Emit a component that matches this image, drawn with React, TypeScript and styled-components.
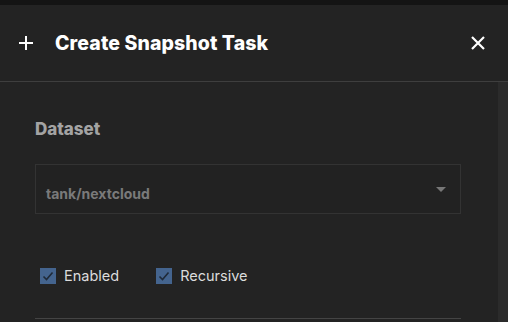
import React from "react";
import { styled, createGlobalStyle } from "styled-components";

const GlobalStyle = createGlobalStyle`
  html, body {
    margin: 0;
    padding: 0;
    background: #232323;
    font-family: Inter, "Noto Sans", sans-serif;
  }
`;

function PlusIcon() {
  return (
    <svg width="16" height="16" viewBox="0 0 16 16">
      <path d="M8 1v14M1 8h14" stroke="#fff" strokeWidth="2" fill="none" />
    </svg>
  );
}

function CloseIcon() {
  return (
    <svg width="16" height="16" viewBox="0 0 16 16">
      <path d="M2 2l12 12M14 2L2 14" stroke="#fff" strokeWidth="2.2" fill="none" />
    </svg>
  );
}

function CheckIcon() {
  return (
    <svg width="12" height="12" viewBox="0 0 12 12">
      <path d="M1.5 6.5l3 3 6-7" stroke="#1f2a38" strokeWidth="1.6" fill="none" />
    </svg>
  );
}

const options = [
  { id: 0, label: "Enabled", checked: true },
  { id: 1, label: "Recursive", checked: true },
];

export default function App() {
  return (
    <>
      <GlobalStyle />
      <Page>
        <TopStrip />
        <Header>
          <IconButton>
            <PlusIcon />
          </IconButton>
          <Title>Create Snapshot Task</Title>
          <CloseButton>
            <CloseIcon />
          </CloseButton>
        </Header>
        <Body>
          <Content>
            <SectionLabel>Dataset</SectionLabel>
            <Select>
              <SelectValue>tank/nextcloud</SelectValue>
              <Caret />
            </Select>
            <CheckRow>
              {options.map(({ id, label, checked }) => (
                <CheckItem key={id}>
                  <Box $checked={checked}>{checked ? <CheckIcon /> : null}</Box>
                  <CheckLabel>{label}</CheckLabel>
                </CheckItem>
              ))}
            </CheckRow>
            <Divider />
          </Content>
          <Scrollbar />
        </Body>
      </Page>
    </>
  );
}

const Page = styled.div`
  display: flex;
  flex-direction: column;
  width: 508px;
  height: 322px;
  overflow: hidden;
  background: #232323;
`;

const TopStrip = styled.div`
  height: 5px;
  background: #141414;
`;

const Header = styled.div`
  display: flex;
  align-items: center;

  height: 77px;
  padding: 0 22px 0 18px;

  border-bottom: 1px solid #3e3e3e;
  box-sizing: border-box;
`;

const IconButton = styled.div`
  display: flex;
  width: 16px;
  height: 16px;
  margin-right: 21px;
`;

const CloseButton = styled.div`
  display: flex;
  width: 16px;
  height: 16px;
  margin-left: auto;
`;

const Title = styled.h1`
  margin: 0;
  color: #fff;
  font-size: 19.5px;
  font-weight: 800;
  letter-spacing: 0.1px;
`;

const Body = styled.div`
  display: flex;
  flex: 1;
`;

const Content = styled.div`
  display: flex;
  flex-direction: column;
  flex: 1;
  padding: 0 37px 0 35px;
`;

const Scrollbar = styled.div`
  width: 10px;
  background: #2b2b2b;
`;

const SectionLabel = styled.div`
  margin-top: 37px;
  color: #a3a3a3;
  font-size: 17px;
  font-weight: 800;
  line-height: 20px;
`;

const Select = styled.div`
  display: flex;
  align-items: center;

  height: 50px;
  margin-top: 25px;
  padding: 8px 14px 0 10px;

  border: 1px solid #333;
  background: #222;
  box-sizing: border-box;
`;

const SelectValue = styled.span`
  color: #7a7a7a;
  font-size: 14px;
  font-weight: 700;
`;

const Caret = styled.span`
  width: 0;
  height: 0;
  margin-left: auto;
  margin-top: -8px;

  border-left: 5px solid transparent;
  border-right: 5px solid transparent;
  border-top: 5px solid #777;
`;

const CheckRow = styled.div`
  display: flex;
  gap: 37px;
  margin-top: 54px;
  padding-left: 5px;
`;

const CheckItem = styled.label`
  display: flex;
  align-items: center;
  gap: 8px;
`;

const Box = styled.span<{ $checked: boolean }>`
  display: flex;
  align-items: center;
  justify-content: center;

  width: 16px;
  height: 16px;

  background: ${({ $checked }) => ($checked ? "#44648e" : "transparent")};
  border: ${({ $checked }) => ($checked ? "none" : "1px solid #888")};
`;

const CheckLabel = styled.span`
  color: #dcdcdc;
  font-size: 14.5px;
  line-height: 16px;
`;

const Divider = styled.div`
  margin-top: 34px;
  border-bottom: 1px solid #444;
`;
